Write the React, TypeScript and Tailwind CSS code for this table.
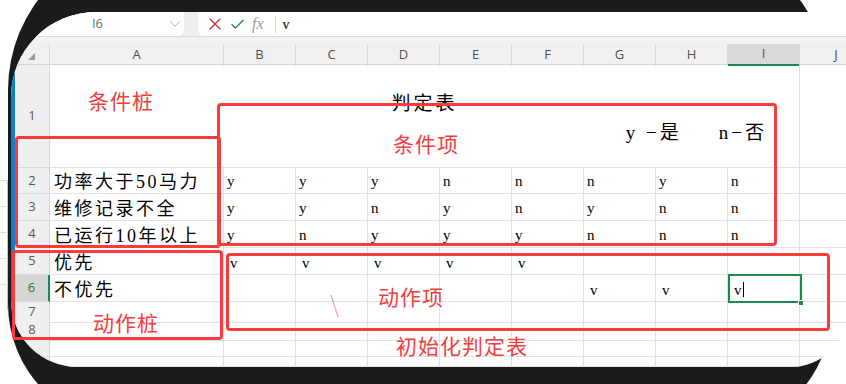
import { Check, ChevronDown, X } from "lucide-react";

type SheetRow = {
  n: string;
  label: string;
  h: string;
  cells: string[];
  pad: string;
  active?: boolean;
};

const letters = ["B", "C", "D", "E", "F", "G", "H", "I"];
const blank = ["", "", "", "", "", "", "", ""];

const rows: SheetRow[] = [
  { n: "2", label: "功率大于50马力", h: "h-[26px]", cells: ["y", "y", "y", "n", "n", "n", "y", "n"], pad: "pl-[3px] pb-[4px]" },
  { n: "3", label: "维修记录不全", h: "h-[27px]", cells: ["y", "y", "n", "y", "n", "y", "n", "n"], pad: "pl-[3px] pb-[4px]" },
  { n: "4", label: "已运行10年以上", h: "h-[27px]", cells: ["y", "n", "y", "y", "y", "n", "n", "n"], pad: "pl-[3px] pb-[4px]" },
  { n: "5", label: "优先", h: "h-[27px]", cells: ["v", "v", "v", "v", "v", "", "", ""], pad: "pl-[6px] pb-[3px]" },
  { n: "6", label: "不优先", h: "h-[27px]", cells: ["", "", "", "", "", "v", "v", "v"], pad: "pl-[6px] pb-[3px]", active: true },
  { n: "7", label: "", h: "h-[18px]", cells: blank, pad: "" },
  { n: "8", label: "", h: "h-[18px]", cells: blank, pad: "" },
  { n: "", label: "", h: "h-[19px]", cells: blank, pad: "" },
  { n: "", label: "", h: "flex-1", cells: blank, pad: "" },
];

const FormulaBar = () => (
  <div className="flex h-[24px] shrink-0 bg-[#efefef] font-['Open_Sans','Noto_Sans',sans-serif]">
    <div className="flex w-[169px] items-center bg-white rounded-br-[6px]">
      <span className="w-[154px] pl-[14px] text-center text-[13px] text-[#6b6b6b]">I6</span>
      <ChevronDown size={18} strokeWidth={1.3} className="shrink-0 text-[#a8a8a8]" />
    </div>
    <div className="w-[14px]" />
    <div className="flex flex-1 items-center bg-white rounded-bl-[6px] pl-[7px]">
      <X size={20} strokeWidth={1.5} className="text-[#c8303a]" />
      <Check size={17} strokeWidth={1.7} className="ml-[4px] text-[#1a8a4e]" />
      <span className="ml-[6px] font-['Liberation_Serif',serif] text-[16px] italic text-[#9c9c9c]">fx</span>
      <div className="ml-[11px] h-[17px] w-px bg-[#d2d2d2]" />
      <span className="ml-[7px] font-['Liberation_Serif',serif] text-[14px] text-black">v</span>
    </div>
  </div>
);

const ColumnHeader = () => (
  <div className="grid h-[21px] shrink-0 grid-cols-[35px_174px_repeat(8,72px)_50px] bg-[#f0f0f0] border-b border-[#d4d4d4] font-['Open_Sans','Noto_Sans',sans-serif] text-[13px] text-[#505050]">
    <div className="flex items-end justify-end pr-[14px] pb-[6px] border-r border-[#d8d8d8]">
      <svg width="7" height="7" viewBox="0 0 7 7">
        <polygon points="7,0 7,7 0,7" fill="#9c9c9c" />
      </svg>
    </div>
    <div className="flex items-center justify-center border-r border-[#d8d8d8]">A</div>
    {letters.map((l) =>
      l === "I" ? (
        <div key={l} className="flex items-center justify-center bg-[#d9d9d9] border-b-2 border-[#1a8a4e] border-r border-r-[#d8d8d8]">
          {l}
        </div>
      ) : (
        <div key={l} className="flex items-center justify-center border-r border-[#d8d8d8]">
          {l}
        </div>
      )
    )}
    <div className="flex items-center justify-center pl-[22px]">J</div>
  </div>
);

const TitleRow = () => (
  <div className="grid h-[103px] shrink-0 grid-cols-[35px_750px_50px]">
    <div className="flex items-center justify-center bg-[#efefef] border-r border-b border-[#d8d8d8] font-['Open_Sans','Noto_Sans',sans-serif] text-[13px] text-[#5a5a5a]">
      1
    </div>
    <div className="flex flex-col pt-[27px] border-r border-b border-[#e1e1e1] font-['Liberation_Serif','Noto_Sans_CJK_SC',serif] text-black">
      <div className="text-center text-[19px] leading-[24px] tracking-[3px]">判定表</div>
      <div className="mt-[5px] flex justify-end gap-[37px] pr-[32px] text-[19px] leading-[24px] tracking-[3px]">
        <span>y −是</span>
        <span>n−否</span>
      </div>
    </div>
    <div className="border-b border-[#e1e1e1]" />
  </div>
);

const Row = ({ row }: { row: SheetRow }) => (
  <div className={`grid shrink-0 grid-cols-[35px_174px_repeat(8,72px)_50px] ${row.h}`}>
    <div
      className={`flex items-center justify-center border-b border-b-[#dcdcdc] font-['Open_Sans','Noto_Sans',sans-serif] text-[13px] ${
        row.active
          ? "bg-[#d6d6d6] text-[#107c41] border-r-2 border-r-[#1a8a4e]"
          : "bg-[#efefef] text-[#5a5a5a] border-r border-r-[#d4d4d4]"
      }`}
    >
      {row.n}
    </div>
    <div className="flex items-end pl-[4px] border-b border-r border-[#e1e1e1] font-['Liberation_Serif','Noto_Sans_CJK_SC',serif] text-[18px] leading-[22px] tracking-[2.5px] text-black">
      {row.label}
    </div>
    {row.cells.map((c, i) =>
      row.active && i === 7 ? (
        <div key={i} className={`relative flex items-end border-b border-r border-[#e1e1e1] ${row.pad} font-['Liberation_Serif',serif] text-[15px] leading-[16px]`}>
          <span>{c}</span>
          <span className="mb-[1px] ml-[1px] h-[15px] w-px bg-black" />
          <div className="absolute left-0 top-[-1px] h-[29px] w-[74px] border-2 border-[#1a8a4e]" />
          <div className="absolute left-[70px] top-[25px] h-[6px] w-[6px] bg-[#1a8a4e] border border-white" />
        </div>
      ) : (
        <div key={i} className={`flex items-end border-b border-r border-[#e1e1e1] ${row.pad} font-['Liberation_Serif',serif] text-[15px] leading-[16px] text-black`}>
          {c}
        </div>
      )
    )}
    <div className="border-b border-[#e1e1e1]" />
  </div>
);

const Sheet = () => (
  <div className="flex h-[355px] w-[839px] shrink-0 overflow-hidden bg-white rounded-[85px_0_60px_67px]">
    <div className="w-[4px] shrink-0 bg-[#0c80d3]" />
    <div className="flex w-[835px] shrink-0 flex-col">
      <FormulaBar />
      <div className="h-[8px] shrink-0 bg-[#f2f2f2] border-t border-[#dadada]" />
      <ColumnHeader />
      <TitleRow />
      {rows.map((r, i) => (
        <Row key={i} row={r} />
      ))}
    </div>
  </div>
);

const EdgeStrip = () => (
  <div className="flex w-[8px] shrink-0 flex-col pt-[180px]">
    {[0, 1, 2, 3, 4].map((i) => (
      <div key={i} className="h-[26px] border-t border-r border-t-[#dedede] border-r-[#c4c4c4]" />
    ))}
  </div>
);

const Notes = () => (
  <div className="pointer-events-none absolute inset-0 font-['Noto_Sans_CJK_SC',sans-serif] text-[21px] leading-none tracking-[1px] text-[#f43d3d]">
    <div className="absolute left-[217px] top-[103px] h-[143px] w-[560px] rounded-[4px] border-[3px] border-[#fb3a3a]" />
    <div className="absolute left-[15px] top-[136px] h-[112px] w-[206px] rounded-[4px] border-[3px] border-[#fb3a3a]" />
    <div className="absolute left-[12px] top-[250px] h-[90px] w-[211px] rounded-[4px] border-[3px] border-[#fb3a3a]" />
    <div className="absolute left-[226px] top-[253px] h-[78px] w-[604px] rounded-[4px] border-[3px] border-[#fb3a3a]" />
    <span className="absolute left-[88px] top-[90px]">条件桩</span>
    <span className="absolute left-[393px] top-[133px]">条件项</span>
    <span className="absolute left-[93px] top-[312px]">动作桩</span>
    <span className="absolute left-[378px] top-[286px]">动作项</span>
    <span className="absolute left-[396px] top-[335px]">初始化判定表</span>
    <svg className="absolute left-[330px] top-[294px]" width="10" height="25" viewBox="0 0 10 25">
      <line x1="1" y1="1" x2="8" y2="23" stroke="#f88" strokeWidth="1" />
    </svg>
  </div>
);

export default function App() {
  return (
    <div className="relative flex h-[384px] w-[846px] overflow-hidden bg-white">
      <EdgeStrip />
      <div className="mt-[-60px] h-[486px] w-[822px] shrink-0 rounded-[150px_150px_110px_122px] bg-[#1b1b1b] pl-[3px] pt-[72px]">
        <Sheet />
      </div>
      <Notes />
    </div>
  );
}
